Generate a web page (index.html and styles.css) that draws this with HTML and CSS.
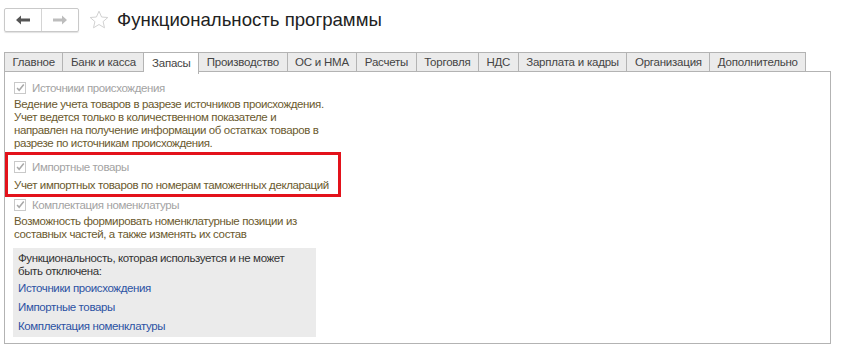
FILE: index.html
```html
<!DOCTYPE html>
<html lang="ru">
<head>
    <meta charset="UTF-8">
    <title>Функциональность программы</title>
    <link rel="stylesheet" href="styles.css">
</head>
<body>
    <div class="header">
        <div class="nav">
            <span class="nav-btn">
                <svg width="14" height="10" viewBox="0 0 14 10"><path d="M0 5 L5 0.5 L5 3.5 L14 3.5 L14 6.5 L5 6.5 L5 9.5 Z" fill="#555"/></svg>
            </span>
            <span class="nav-btn">
                <svg width="14" height="10" viewBox="0 0 14 10"><path d="M14 5 L9 0.5 L9 3.5 L0 3.5 L0 6.5 L9 6.5 L9 9.5 Z" fill="#bdbdbd"/></svg>
            </span>
        </div>
        <svg class="star" width="20" height="20" viewBox="0 0 20 20"><path d="M10 1.2 L12.6 7 L18.8 7.5 L14.1 11.6 L15.5 17.8 L10 14.5 L4.5 17.8 L5.9 11.6 L1.2 7.5 L7.4 7 Z" fill="none" stroke="#d2d2d2" stroke-width="1" stroke-linejoin="round"/></svg>
        <h1>Функциональность программы</h1>
    </div>

    <div class="tabs">
        <span class="tab">Главное</span>
        <span class="tab">Банк и касса</span>
        <span class="tab active">Запасы</span>
        <span class="tab">Производство</span>
        <span class="tab">ОС и НМА</span>
        <span class="tab">Расчеты</span>
        <span class="tab">Торговля</span>
        <span class="tab">НДС</span>
        <span class="tab">Зарплата и кадры</span>
        <span class="tab">Организация</span>
        <span class="tab">Дополнительно</span>
    </div>

    <div class="panel">
        <div class="option first">
            <div class="check-row">
                <span class="checkbox"><svg width="12" height="12" viewBox="0 0 12 12"><path d="M2.5 6 L5 8.8 L10.5 1.8" fill="none" stroke="#a8a8a8" stroke-width="1.8"/></svg></span>
                <span class="check-label">Источники происхождения</span>
            </div>
            <p class="desc">Ведение учета товаров в разрезе источников происхождения.<br>Учет ведется только в количественном показателе и<br>направлен на получение информации об остатках товаров в<br>разрезе по источникам происхождения.</p>
        </div>

        <div class="option marked">
            <div class="check-row">
                <span class="checkbox"><svg width="12" height="12" viewBox="0 0 12 12"><path d="M2.5 6 L5 8.8 L10.5 1.8" fill="none" stroke="#a8a8a8" stroke-width="1.8"/></svg></span>
                <span class="check-label">Импортные товары</span>
            </div>
            <p class="desc">Учет импортных товаров по номерам таможенных деклараций</p>
        </div>

        <div class="option">
            <div class="check-row">
                <span class="checkbox"><svg width="12" height="12" viewBox="0 0 12 12"><path d="M2.5 6 L5 8.8 L10.5 1.8" fill="none" stroke="#a8a8a8" stroke-width="1.8"/></svg></span>
                <span class="check-label">Комплектация номенклатуры</span>
            </div>
            <p class="desc">Возможность формировать номенклатурные позиции из<br>составных частей, а также изменять их состав</p>
        </div>

        <div class="locked">
            <p class="locked-text">Функциональность, которая используется и не может<br>быть отключена:</p>
            <a class="link" href="#">Источники происхождения</a>
            <a class="link" href="#">Импортные товары</a>
            <a class="link" href="#">Комплектация номенклатуры</a>
        </div>
    </div>
</body>
</html>
```

FILE: styles.css
```css
body {
    margin: 0;
    font-family: "Liberation Sans", Arial, sans-serif;
    font-size: 11.5px;
    letter-spacing: -0.38px;
    color: #333;
    background: #fff;
}

.header {
    display: flex;
    align-items: center;
    padding: 8px 0 0 4px;
    height: 24px;
}

.nav {
    display: flex;
    border: 1px solid #c9c9c9;
    border-radius: 2px;
    box-shadow: 0 1px 1px rgba(0, 0, 0, 0.12);
    height: 22px;
}

.nav-btn {
    width: 36px;
    display: flex;
    align-items: center;
    justify-content: center;
}

.nav-btn + .nav-btn {
    border-left: 1px solid #d4d4d4;
}

.star {
    margin-left: 10px;
}

h1 {
    margin: 0 0 0 8px;
    font-size: 18.6px;
    font-weight: normal;
    letter-spacing: 0;
    color: #222;
}

.tabs {
    display: flex;
    margin: 20px 0 0 4px;
    height: 19px;
}

.tab {
    display: flex;
    align-items: center;
    padding: 0 7.5px 1px;
    border: 1px solid #b3b3b3;
    border-bottom: none;
    border-left: none;
    background: #ebebeb;
    color: #444;
    letter-spacing: -0.22px;
}

.tab:first-child {
    border-left: 1px solid #b3b3b3;
}

.tab.active {
    background: #fff;
    height: 20px;
    position: relative;
    z-index: 1;
}

.panel {
    margin-left: 4px;
    width: 825px;
    height: 271px;
    border: 1px solid #b3b3b3;
}

.option {
    padding-left: 9px;
}

.option.first {
    padding-top: 8px;
}

.option.marked {
    margin: 2px 0 0 0;
    width: 324px;
    padding: 4px 0 2px 6px;
    border: 3px solid #e3121b;
}

.check-row {
    display: flex;
    align-items: center;
    height: 16px;
}

.checkbox {
    width: 12px;
    height: 12px;
    box-sizing: border-box;
    border: 1px solid #c9c9c9;
    display: flex;
    align-items: center;
    justify-content: center;
}

.check-label {
    margin-left: 6px;
    color: #a3a3a3;
}

.desc {
    margin: 2px 0 0;
    line-height: 13px;
    color: #6b5a2e;
}

.marked .desc {
    margin-top: 4px;
}

.locked {
    margin: 7px 0 0 8px;
    width: 298px;
    padding: 4px 0 0 5px;
    height: 85px;
    background: #ebebeb;
}

.locked-text {
    margin: 0;
    line-height: 13px;
    color: #333;
}

.link {
    display: block;
    line-height: 19px;
    color: #2b52a3;
    text-decoration: none;
}

.locked-text + .link {
    margin-top: 1px;
}
```
